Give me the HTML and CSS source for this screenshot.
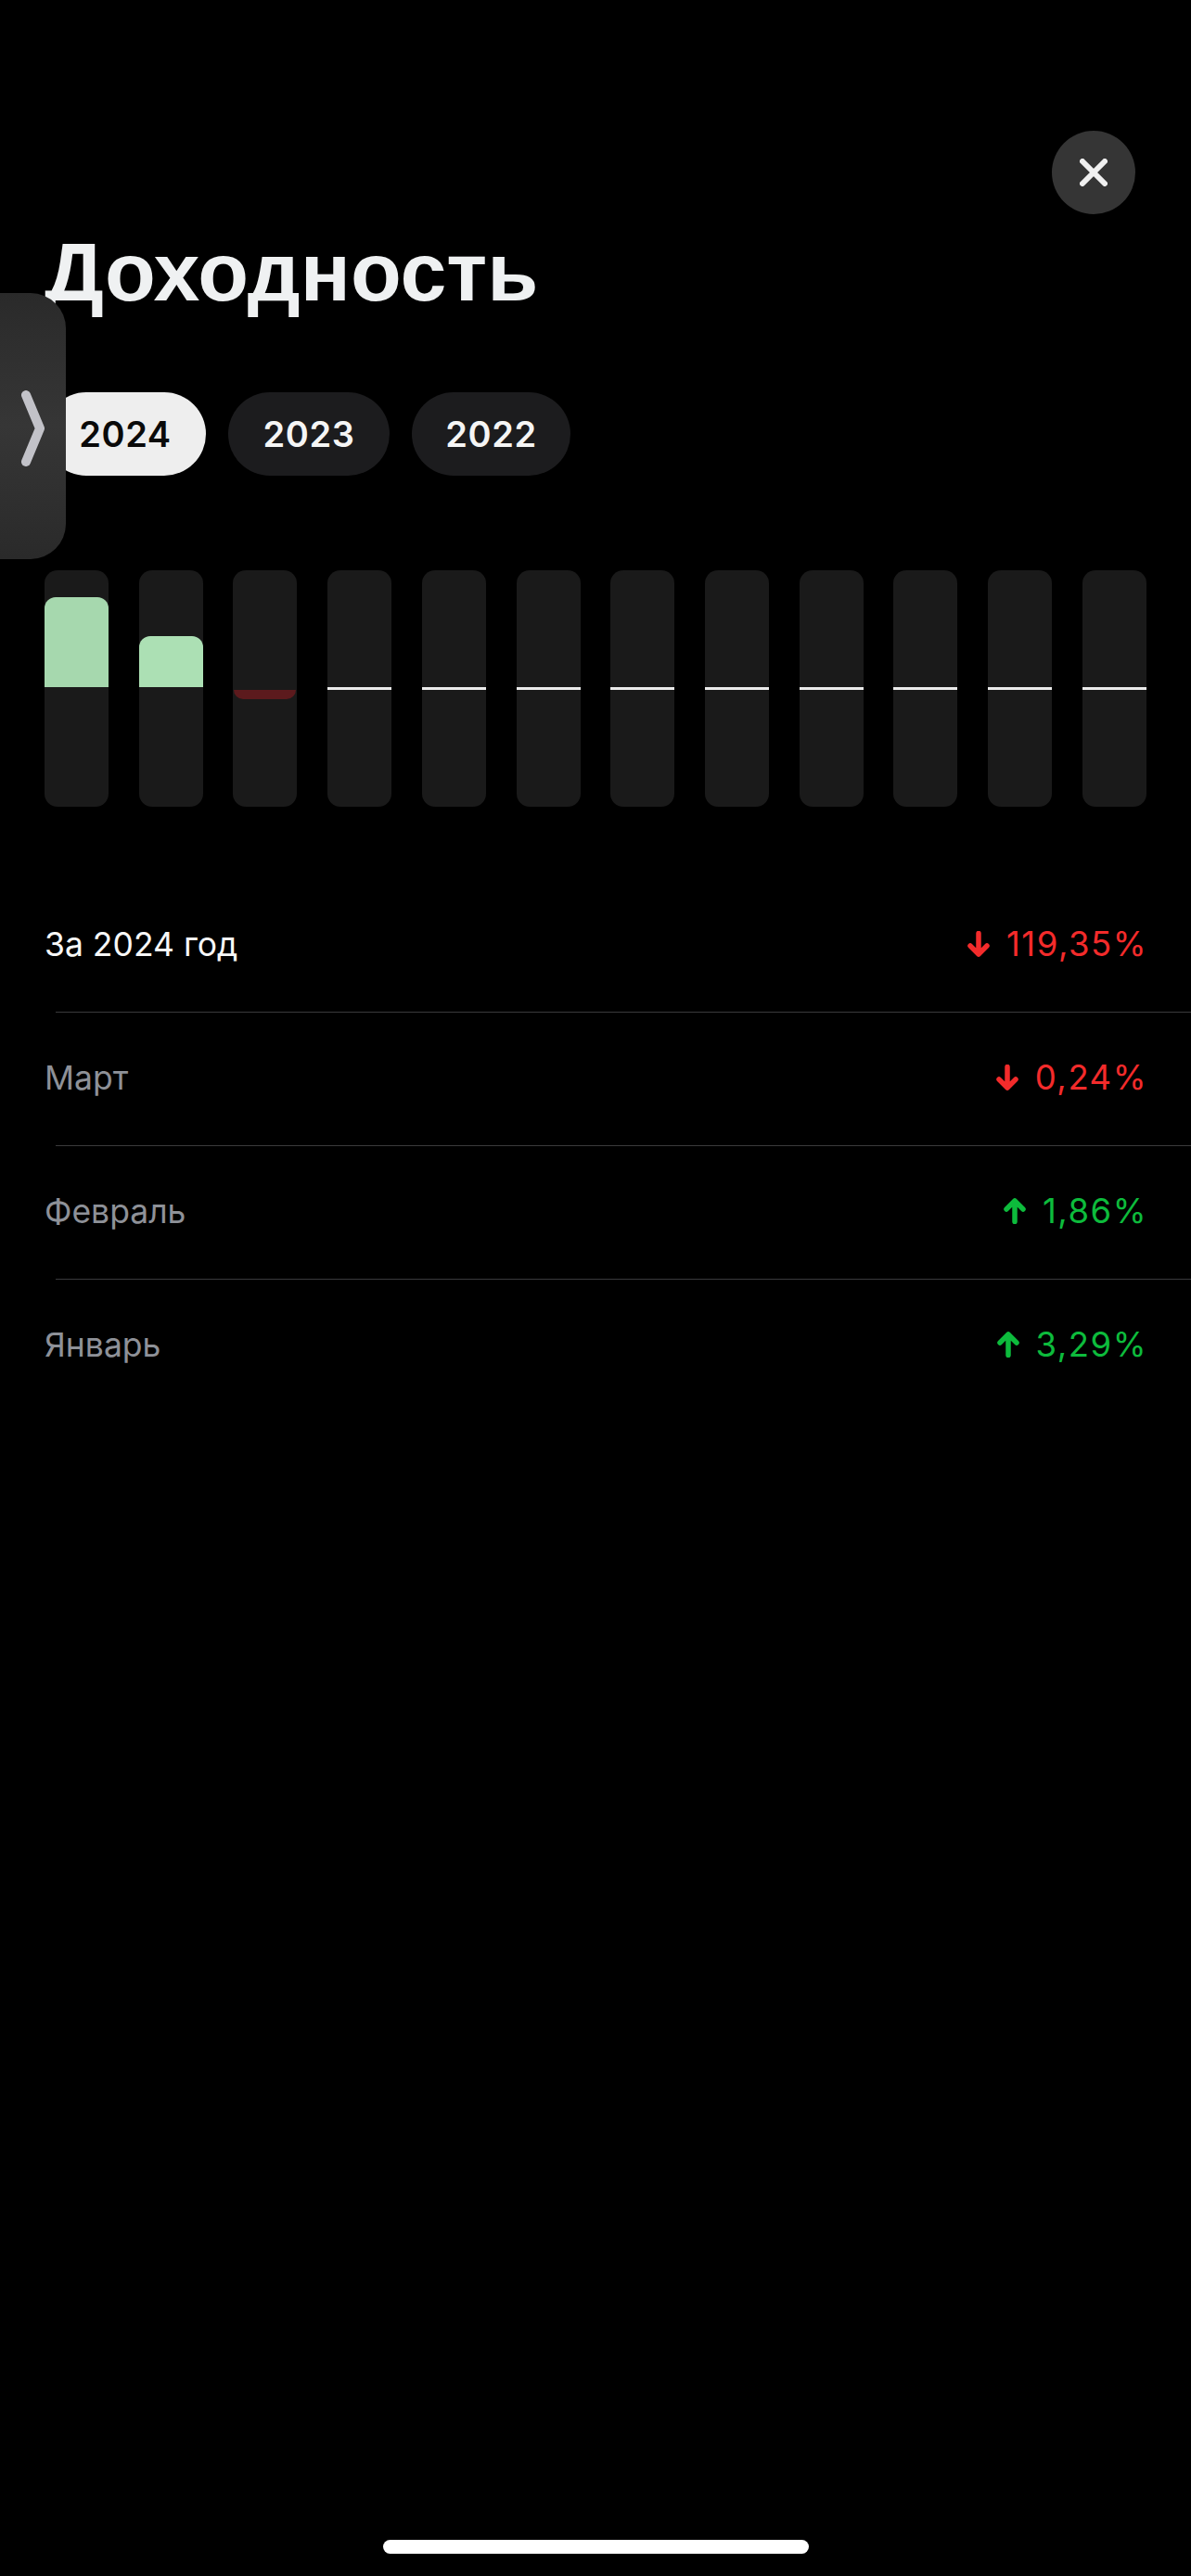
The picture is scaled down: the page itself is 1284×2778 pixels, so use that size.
FILE: index.html
```html
<!DOCTYPE html>
<html lang="ru">
<head>
<meta charset="utf-8">
<title>Доходность</title>
<link rel="stylesheet" href="styles.css">
</head>
<body>
<main class="page">
  <div class="handle">
    <svg class="handle-icon" width="25" height="82" viewBox="0 0 25 82"><path d="M5 5 L20 41 L5 77" fill="none" stroke="#c2c2c8" stroke-width="10" stroke-linecap="round" stroke-linejoin="round"/></svg>
  </div>
  <button class="close" aria-label="Закрыть">
    <svg width="30" height="30" viewBox="0 0 30 30"><path d="M3 3 L27 27 M27 3 L3 27" fill="none" stroke="#f0f0f0" stroke-width="6" stroke-linecap="round"/></svg>
  </button>
  <h1 class="title">Доходность</h1>
  <div class="pills">
    <span class="pill pill-active">2024</span>
    <span class="pill">2023</span>
    <span class="pill pill-narrow">2022</span>
  </div>
  <div class="chart">
    <div class="bar"><div class="upper"><div class="fill fill-a" style="height:97px"></div></div><div class="lower"></div></div>
    <div class="bar"><div class="upper"><div class="fill fill-b" style="height:55px"></div></div><div class="lower"></div></div>
    <div class="bar"><div class="upper"></div><div class="lower"><div class="neg"></div></div></div>
    <div class="bar"><div class="upper"></div><div class="zero"></div><div class="lower"></div></div>
    <div class="bar"><div class="upper"></div><div class="zero"></div><div class="lower"></div></div>
    <div class="bar"><div class="upper"></div><div class="zero"></div><div class="lower"></div></div>
    <div class="bar"><div class="upper"></div><div class="zero"></div><div class="lower"></div></div>
    <div class="bar"><div class="upper"></div><div class="zero"></div><div class="lower"></div></div>
    <div class="bar"><div class="upper"></div><div class="zero"></div><div class="lower"></div></div>
    <div class="bar"><div class="upper"></div><div class="zero"></div><div class="lower"></div></div>
    <div class="bar"><div class="upper"></div><div class="zero"></div><div class="lower"></div></div>
    <div class="bar"><div class="upper"></div><div class="zero"></div><div class="lower"></div></div>
  </div>
  <section class="rows">
    <div class="row row-total">
      <span class="label">За 2024 год</span>
      <span class="value down"><svg class="arrow" width="24" height="28" viewBox="0 0 24 28"><path d="M12 2.5 V25 M3 16 L12 25 L21 16" fill="none" stroke="currentColor" stroke-width="5.5" stroke-linecap="round" stroke-linejoin="round"/></svg>119,35%</span>
    </div>
    <hr class="sep">
    <div class="row">
      <span class="label">Март</span>
      <span class="value down"><svg class="arrow" width="24" height="28" viewBox="0 0 24 28"><path d="M12 2.5 V25 M3 16 L12 25 L21 16" fill="none" stroke="currentColor" stroke-width="5.5" stroke-linecap="round" stroke-linejoin="round"/></svg>0,24%</span>
    </div>
    <hr class="sep">
    <div class="row">
      <span class="label">Февраль</span>
      <span class="value up"><svg class="arrow" width="24" height="28" viewBox="0 0 24 28"><path d="M12 25.5 V3 M3 12 L12 3 L21 12" fill="none" stroke="currentColor" stroke-width="5.5" stroke-linecap="round" stroke-linejoin="round"/></svg>1,86%</span>
    </div>
    <hr class="sep">
    <div class="row">
      <span class="label">Январь</span>
      <span class="value up"><svg class="arrow" width="24" height="28" viewBox="0 0 24 28"><path d="M12 25.5 V3 M3 12 L12 3 L21 12" fill="none" stroke="currentColor" stroke-width="5.5" stroke-linecap="round" stroke-linejoin="round"/></svg>3,29%</span>
    </div>
  </section>
  <div class="home-bar"></div>
</main>
</body>
</html>
```
FILE: styles.css
```css
* { box-sizing: border-box; }
html, body { margin: 0; padding: 0; background: #000; }
.page {
  position: relative;
  width: 1284px;
  height: 2778px;
  overflow: hidden;
  display: flex;
  flex-direction: column;
  padding-top: 141px;
  background: #000;
  font-family: Inter, "Liberation Sans", sans-serif;
  color: #fff;
}
.handle {
  position: absolute;
  left: 0;
  top: 316px;
  width: 71px;
  height: 287px;
  border-radius: 0 38px 38px 0;
  background: linear-gradient(180deg, #2a2a2a 0%, #363636 50%, #2a2a2a 100%);
  z-index: 2;
  display: flex;
  align-items: center;
}
.handle-icon { margin-left: 23px; margin-top: 4px; }
.close {
  align-self: flex-end;
  width: 90px;
  height: 90px;
  margin: 0 60px 0 0;
  padding: 0;
  border: 0;
  border-radius: 50%;
  background: #353535;
  display: flex;
  align-items: center;
  justify-content: center;
}
.title {
  margin: 12px 0 0 48px;
  height: 100px;
  font-family: "Liberation Sans", Arial, sans-serif;
  font-size: 89.7px;
  line-height: 100px;
  font-weight: 700;
  color: #eff1f2;
}
.pills {
  display: flex;
  gap: 24px;
  margin: 80px 0 0 48px;
}
.pill {
  width: 174px;
  height: 90px;
  border-radius: 45px;
  background: #1c1c1e;
  color: #f5f5f5;
  font-size: 38px;
  font-weight: 600;
  letter-spacing: 0.6px;
  display: flex;
  align-items: center;
  justify-content: center;
}
.pill-narrow { width: 171px; }
.pill-active {
  background: #eeeeee;
  color: #0a0a0a;
}
.chart {
  display: flex;
  justify-content: space-between;
  margin: 102px 48px 0;
}
.bar {
  width: 69px;
  height: 255px;
  border-radius: 14px;
  background: #1a1a1a;
  display: flex;
  flex-direction: column;
  overflow: hidden;
}
.upper {
  height: 126px;
  display: flex;
  flex-direction: column;
  justify-content: flex-end;
}
.lower { flex: 1; padding: 3px 1px 0; }
.zero { height: 3px; background: #eaeaea; }
.fill { border-radius: 12px 12px 0 0; }
.fill-a { background: #a6d8ae; }
.fill-b { background: #ace0b4; }
.neg {
  height: 10px;
  border-radius: 0 0 10px 10px;
  background: #5c1a1d;
}
.rows { margin-top: 78px; }
.row {
  height: 143px;
  padding: 0 47px 3px 48px;
  display: flex;
  align-items: center;
  justify-content: space-between;
  font-size: 35.5px;
}
.label { color: #8e9198; }
.row-total .label { color: #f7f7f7; }
.value {
  display: flex;
  align-items: center;
  font-size: 36.5px;
  letter-spacing: 1.5px;
}
.arrow { margin-right: 18px; }
.down { color: #f32b2b; }
.up { color: #0dbb3c; }
.sep {
  height: 1px;
  margin: 0 0 0 60px;
  border: 0;
  background: #3a3a3c;
}
.home-bar {
  width: 459px;
  height: 15px;
  border-radius: 8px;
  background: #fff;
  margin: auto 0 24px 413px;
}
```
